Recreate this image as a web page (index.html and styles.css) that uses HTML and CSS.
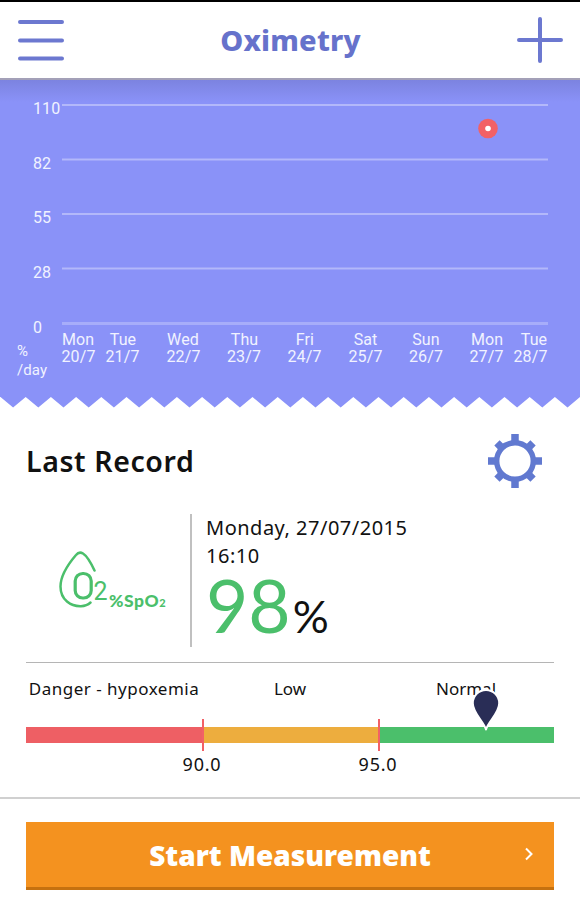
FILE: index.html
```
<!DOCTYPE html>
<html lang="en">
<head>
    <meta charset="UTF-8">
    <meta name="viewport" content="width=device-width, initial-scale=1.0">
    <title>Oximetry</title>
    <link rel="stylesheet" href="styles.css">
</head>
<body>
    <header class="topbar">
        <svg class="icon-menu" width="46" height="42" viewBox="0 0 46 42">
            <path d="M2 3H44M2 21.500H44M2 39.500H44"/>
        </svg>
        <h1>Oximetry</h1>
        <svg class="icon-plus" width="46" height="46" viewBox="0 0 46 46">
            <path d="M2 23H44M23 2V44"/>
        </svg>
    </header>

    <section class="chart">
        <svg width="580" height="328" viewBox="0 80 580 328">
            <g class="grid">
                <path d="M62 105H548M62 159.5H548M62 214H548M62 268.5H548"/>
                <path class="base" d="M62 323.5H548"/>
            </g>
            <g class="y-labels">
                <text x="33" y="113.5">110</text>
                <text x="33" y="168.5">82</text>
                <text x="33" y="223">55</text>
                <text x="33" y="277.5">28</text>
                <text x="33" y="332.5">0</text>
                <text class="unit" x="17" y="355.5">%</text>
                <text class="unit" x="17" y="375">/day</text>
            </g>
            <g class="x-labels">
                <text x="78" y="345">Mon</text><text x="78.5" y="362.3">20/7</text>
                <text x="123" y="345">Tue</text><text x="122.5" y="362.3">21/7</text>
                <text x="183" y="345">Wed</text><text x="183.5" y="362.3">22/7</text>
                <text x="244.5" y="345">Thu</text><text x="244" y="362.3">23/7</text>
                <text x="305" y="345">Fri</text><text x="304.5" y="362.3">24/7</text>
                <text x="365.5" y="345">Sat</text><text x="365.5" y="362.3">25/7</text>
                <text x="426" y="345">Sun</text><text x="426" y="362.3">26/7</text>
                <text x="487" y="345">Mon</text><text x="486.5" y="362.3">27/7</text>
                <text x="534" y="345">Tue</text><text x="530.5" y="362.3">28/7</text>
            </g>
            <circle class="point" cx="488" cy="128.5" r="9.8"/>
            <circle class="point-core" cx="488" cy="128.5" r="2.8"/>
            <!-- torn paper edge -->
            <path class="edge" d="M0.500 397l12.600 10.500l12.600-10.500l12.600 10.500l12.600-10.500l12.600 10.500l12.600-10.500l12.600 10.500l12.600-10.500l12.600 10.500l12.600-10.500l12.600 10.500l12.600-10.500l12.600 10.500l12.600-10.500l12.600 10.500l12.600-10.500l12.600 10.500l12.600-10.500l12.600 10.500l12.600-10.500l12.600 10.500l12.600-10.500l12.600 10.500l12.600-10.500l12.600 10.500l12.600-10.500l12.600 10.500l12.600-10.500l12.600 10.500l12.600-10.500l12.600 10.500l12.600-10.500l12.600 10.500l12.600-10.500l12.600 10.500l12.600-10.500l12.600 10.500l12.600-10.500l12.600 10.500l12.600-10.500l12.600 10.500l12.600-10.500l12.600 10.500l12.600-10.500l12.600 10.500l12.600-10.500V410H0V397Z"/>
        </svg>
    </section>

    <main class="record">
        <div class="record-head">
            <h2>Last Record</h2>
            <svg class="icon-gear" width="56" height="56" viewBox="-28 -28 56 56">
                <circle r="18.3"/>
                <path d="M0 -27V-18M0 27V18M-27 0H-18M27 0H18"/>
                <path d="M0 -25.500V-18M0 25.500V18M-25.500 0H-18M25.500 0H18" transform="rotate(45)"/>
            </svg>
        </div>

        <div class="reading">
            <div class="kind">
                <svg width="114" height="62" viewBox="56 550 114 62">
                    <path class="drop" d="M94.5 570.5C91 563 87 556 83 553.5C80.500 552 78 552.500 76 555C70 562 60.500 574 60.500 586.500C60.500 600 71 606.500 81 606.200C85 606 88 604.800 90.500 602.500"/>
                    <rect class="o" x="75.200" y="573.500" width="16" height="24.500" rx="7.600"/>
                    <text class="two" x="93.500" y="599.500">2</text>
                    <text class="spo" x="109" y="607">%SpO<tspan class="sub">2</tspan></text>
                </svg>
            </div>
            <div class="values">
                <p class="date">Monday, 27/07/2015</p>
                <p class="time">16:10</p>
                <p class="value">98<span class="percent">%</span></p>
            </div>
        </div>

        <div class="scale">
            <div class="names"><span>Danger - hypoxemia</span><span>Low</span><span>Normal</span></div>
            <div class="bar">
                <div class="danger"></div>
                <div class="low"></div>
                <div class="normal"></div>
                <svg class="pin" width="30" height="44" viewBox="0 0 30 44">
                    <path d="M15 42.500C12.500 34 1.800 26 1.800 16.200A13.200 13.200 0 0 1 28.200 16.200C28.200 26 17.500 34 15 42.500Z"/>
                </svg>
            </div>
            <div class="limits"><span>90.0</span><span>95.0</span></div>
        </div>
    </main>

    <footer class="bottom">
        <button class="start">
            <span>Start Measurement</span>
            <svg class="chevron" width="10" height="14" viewBox="0 0 10 14"><path d="M2 1.500L7.500 7L2 12.500"/></svg>
        </button>
    </footer>
</body>
</html>
```
FILE: styles.css
```
:root {
    --blue: #6672cb;
    --chart: #8a92f8;
    --green: #4bbf6b;
    --red: #ee5f64;
    --yellow: #edad3e;
    --orange: #f4921f;
}

* {
    box-sizing: border-box;
    margin: 0;
    padding: 0;
}

body {
    width: 580px;
    height: 900px;
    overflow: hidden;
    background: #fff;
    color: #111;
    font-family: 'Noto Sans', sans-serif;
}

svg {
    display: block;
}

.topbar {
    display: flex;
    justify-content: space-between;
    align-items: center;
    height: 80px;
    padding: 0 17px 0 18px;
    border-top: 2px solid #000;
    border-bottom: 2px solid #a3a0b8;
}

.topbar h1 {
    color: var(--blue);
    font-size: 29px;
    font-weight: 800;
    line-height: 40px;
    letter-spacing: 0.2px;
}

.icon-menu path,
.icon-plus path {
    stroke: #6c78d0;
    stroke-width: 4;
    stroke-linecap: round;
}

.chart {
    height: 328px;
    background: linear-gradient(#7c83e0, var(--chart) 22px);
}

.grid path {
    stroke: rgba(255, 255, 255, 0.35);
    stroke-width: 1.8;
}

.grid .base {
    stroke: rgba(255, 255, 255, 0.25);
    stroke-width: 3;
}

.chart text {
    font-family: Roboto, sans-serif;
    font-size: 16px;
    letter-spacing: 0.1px;
    fill: #f1f2ff;
}

.chart .unit {
    font-size: 15px;
}

.x-labels text {
    text-anchor: middle;
}

.point {
    fill: #f26166;
}

.point-core,
.edge {
    fill: #fff;
}

.record {
    height: 391px;
    padding: 24px 26px 0;
    border-bottom: 2px solid #d0d0d0;
}

.record-head {
    display: flex;
    justify-content: space-between;
    align-items: center;
    height: 58px;
    padding-right: 11px;
}

.record-head h2 {
    font-size: 28.5px;
    font-weight: 600;
    letter-spacing: 0.6px;
}

.icon-gear {
    fill: none;
    stroke: #6179d0;
}

.icon-gear circle {
    stroke-width: 5.4;
}

.icon-gear path {
    stroke-width: 7.5;
}

.reading {
    display: flex;
    height: 173px;
    padding: 24px 0 15px;
    border-bottom: 1px solid #b5b5b5;
}

.kind {
    width: 166px;
    padding: 36px 0 0 30px;
    border-right: 2px solid #c0c0c0;
}

.drop,
.o {
    fill: none;
    stroke: var(--green);
    stroke-width: 2.5;
    stroke-linecap: round;
}

.o {
    stroke-width: 3.2;
}

.kind text {
    fill: var(--green);
}

.two {
    font: 25px Roboto, sans-serif;
}

.spo {
    font: 900 17.5px Lato, sans-serif;
    letter-spacing: 0.5px;
}

.sub {
    font-size: 11px;
}

.values {
    padding-left: 14px;
    font-size: 20px;
}

.date,
.time {
    line-height: 28px;
    letter-spacing: 0.5px;
}

.value {
    height: 78px;
    color: var(--green);
    font-family: Lato, sans-serif;
    font-size: 73px;
    line-height: 70px;
}

.percent {
    margin-left: 2px;
    color: #111;
    font-size: 45px;
    line-height: 1;
}

.names {
    display: grid;
    grid-template-columns: repeat(3, 1fr);
    padding-top: 13px;
    font-size: 17px;
    line-height: 26px;
    text-align: center;
}

.names span:first-child {
    letter-spacing: 0.5px;
}

.bar {
    position: relative;
    display: grid;
    grid-template-columns: repeat(3, 1fr);
    height: 16px;
    margin-top: 25px;
}

.danger {
    background: var(--red);
}

.low {
    background: var(--yellow);
}

.normal {
    background: var(--green);
}

/* limit ticks stick out above and below the bar */
.danger::after,
.low::after {
    content: '';
    position: absolute;
    top: -8px;
    left: 33.333%;
    width: 2px;
    height: 32px;
    background: #f26166;
}

.low::after {
    left: 66.666%;
}

.pin {
    position: absolute;
    left: 445px;
    top: -40px;
}

.pin path {
    fill: #292d56;
    stroke: #fff;
    stroke-width: 2;
    stroke-linejoin: round;
}

.limits {
    display: flex;
    justify-content: space-around;
    padding: 8px 88px;
    font-size: 18px;
    line-height: 26px;
    letter-spacing: 0.8px;
}

.bottom {
    padding: 23px 26px 0;
}

.start {
    position: relative;
    display: block;
    width: 100%;
    height: 68px;
    border: none;
    border-bottom: 3px solid #c5710f;
    background: var(--orange);
    color: #fff;
    font-family: inherit;
    font-size: 28px;
    font-weight: 900;
}

.chevron {
    position: absolute;
    right: 20px;
    top: 25px;
    fill: none;
    stroke: #fff;
    stroke-width: 2;
}
```
